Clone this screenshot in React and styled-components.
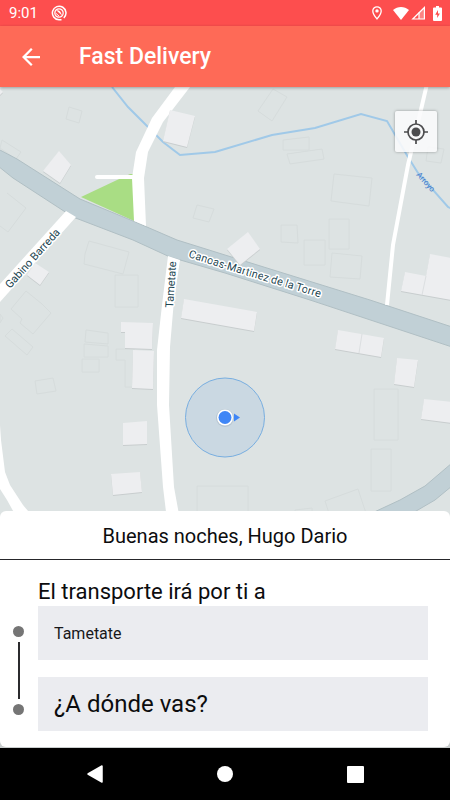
import React, { useState } from "react";
import styled, { createGlobalStyle } from "styled-components";

const GlobalStyle = createGlobalStyle`
  * { box-sizing: border-box; }
  body { margin: 0; background: #c9cdcd; font-family: Roboto, "Noto Sans", sans-serif; }
  button, input { font-family: inherit; }
`;

const Screen = styled.div`
  display: flex;
  flex-direction: column;
  min-height: 100vh;
`;

const StatusBar = styled.header`
  display: flex;
  align-items: center;
  height: 26px;
  padding: 0 8px 0 9px;
  background: #fd4e4e;
  color: #fff;
`;

const Clock = styled.time`
  font-size: 15px;
  line-height: 26px;
  margin-right: 13px;
`;

const StatusIcons = styled.div`
  display: flex;
  align-items: center;
  margin-left: auto;
`;

const StatusIcon = styled.svg`
  display: block;
  width: ${(p) => p.$w}px;
  height: ${(p) => p.$h}px;
  margin-left: ${(p) => p.$gap || 0}px;
`;

const AppBar = styled.div`
  display: flex;
  align-items: center;
  gap: 30px;
  height: 61px;
  padding: 0 13px;
  background: #fe6a57;
  color: #fff;
  box-shadow: 0 1px 3px rgba(0, 0, 0, 0.3);
  z-index: 1;
`;

const BackButton = styled.button`
  display: grid;
  place-items: center;
  width: 36px;
  height: 36px;
  padding: 0;
  border: 0;
  background: none;
  color: inherit;
`;

const Title = styled.h1`
  margin: 0;
  font-size: 23px;
  line-height: 30px;
  font-weight: 500;
`;

const MapArea = styled.main`
  position: relative;
  flex: 1 1 430px;
  min-height: 240px;
  margin-bottom: -6px;
  background: #dde3e3;
`;

const MapDrawing = styled.svg`
  position: absolute;
  inset: 0;
  width: 100%;
  height: 100%;
  font-family: Roboto, sans-serif;
`;

const LocateButton = styled.button`
  position: absolute;
  top: 24px;
  right: 13px;
  display: grid;
  place-items: center;
  width: 42px;
  height: 41px;
  padding: 0;
  border: 0;
  border-radius: 2px;
  background: rgba(250, 250, 252, 0.87);
  box-shadow: 0 0 3px rgba(0, 0, 0, 0.35);
`;

const Sheet = styled.section`
  position: relative;
  background: #fff;
  border-radius: 6px;
  margin-bottom: 1px;
`;

const Greeting = styled.h2`
  margin: 0;
  padding: 11px 16px 9px;
  border-bottom: 1px solid #26262a;
  font-size: 20px;
  line-height: 28px;
  font-weight: 400;
  text-align: center;
  color: #0c0c0e;
`;

const TripForm = styled.form`
  display: grid;
  grid-template-columns: 38px 1fr;
  padding: 18px 22px 16px 0;
`;

const FieldLabel = styled.label`
  grid-column: 2;
  font-size: 22px;
  line-height: 28px;
  color: #0c0c0e;
`;

const Rail = styled.div`
  display: flex;
  flex-direction: column;
  align-items: center;
  gap: 5px;
  padding: 20px 1px 16px 0;
`;

const Stop = styled.span`
  width: 11px;
  height: 11px;
  border-radius: 50%;
  background: #757575;
`;

const Line = styled.span`
  flex: 1;
  width: 2px;
  background: #2b2b2e;
`;

const Fields = styled.div`
  display: grid;
  gap: 17px;
`;

const Field = styled.input`
  width: 100%;
  height: 54px;
  padding: 0 16px;
  border: 0;
  border-radius: 0;
  outline: 0;
  background: #ebecf0;
  color: #18181a;
  font-size: ${(p) => (p.$large ? 24 : 16)}px;

  &::placeholder {
    color: #0c0c0e;
    opacity: 1;
  }
`;

const NavBar = styled.nav`
  display: grid;
  grid-template-columns: repeat(3, 1fr);
  height: 52px;
  padding: 0 30px;
  background: #000;
`;

const NavButton = styled.button`
  display: grid;
  place-items: center;
  padding: 0;
  border: 0;
  background: none;
`;

const OUTLINES = [
  "M69 107l13 4-3 12-13-4z",
  "M2 140l19 12-5 7-16-11z",
  "M7 193l19 15-18 24-8-6",
  "M89 241l40 11-6 22-39-10 1-10z",
  "M115 275h23v32h-23z",
  "M197 205l17 4-5 13-16-4z",
  "M26 291l16 13 9 9-18 21-13-11 2-4-11-10z",
  "M0 323v-9l3 4z",
  "M12 329l21 18-6 8-22-19z",
  "M86 330l22 3v11l-23-2z",
  "M84 344l24 2v11h-24z",
  "M82 359h17v13H82z",
  "M116 349h18v38h-9v-27h-9z",
  "M35 381l18-3 3 13-19 3z",
  "M273 89l14 8-15 24-14-10z",
  "M283 140l26-3v13h-26z",
  "M287 154l35-5 2 10-34 5z",
  "M334 174l38 4-3 28-38-5z",
  "M281 225h16l1 18-17-1z",
  "M329 219h20v30h-20z",
  "M304 240h21v25h-21z",
  "M332 253l30 3-2 23-30-2z",
  "M428 147l16 2-3 14-15-2z",
  "M374 389h24v51h-24z",
  "M371 449h20v42h-20z",
  "M197 525v-39h51v39z",
  "M325 501l33-12 8 24-33 12z",
  "M295 510l17-2v14h-16z",
];

const BUILDINGS = [
  "M170 110l25 6-8 31-24-6z",
  "M59 151l12 14-11 18-17-12z",
  "M27 275l8-12 14 9-9 13z",
  "M184 299l73 13-3 19-73-13z",
  "M227 249l21-17 12 17-20 16z",
  "M121 322l32 1-1 26-27-1v-16h-4z",
  "M133 350l21 1-1 38-21-1z",
  "M123 423l24-2v23l-24 1z",
  "M111 474l29-2 2 20-29 3z",
  "M338 330l46 8-3 19-46-8z",
  "M397 358l21 2-4 27-20-3z",
  "M424 399l28 3v21l-31-4z",
  "M405 272l21 4 4-22 22 4v42l-51-9z",
  "M0 89l3 3-3 3z",
];

function CityMap() {
  return (
    <MapDrawing
      viewBox="0 87 450 430"
      preserveAspectRatio="xMidYMid slice"
      role="img"
      aria-label="Mapa de la zona"
    >
      <g fill="none" stroke="#d6dcdc">
        {OUTLINES.map((d) => (
          <path key={d} d={d} />
        ))}
      </g>
      <path
        d="M112 87L128 107 163 142 180 155 215 152 225 149 272 135 315 128 361 114 387 121 408 157 418 173 448 207 452 209"
        fill="none"
        stroke="#a0c9e8"
        strokeWidth="2"
      />
      <path d="M81 197L117 180 130 174H134V221z" fill="#a9dd84" />
      <path
        d="M-2 149L17 159 80 199 133 221 177 240 225 255 370 300 452 327V347L310 300 225 273 170 257 133 240 73 217 13 178 -2 166z"
        fill="#c1d0d6"
        stroke="#b0bfc4"
      />
      <path
        d="M452 463L425 486 400 500 370 514H411L435 500 452 486z"
        fill="#c1d0d6"
        stroke="#b0bfc4"
      />
      <g fill="#fff">
        <path d="M175 87H190L163 122 148 152 144 178 146 226 134 221 132 178 136 152 152 118z" />
        <path d="M168 256L180 260 174 300 170 347 169 405 174 487 180 520H167L163 487 157 405V350L162 305z" />
        <path d="M66 211L76 217 0 302V284z" />
        <path d="M0 425L1 440 5 472 10 485 23 505 34 518H17L7 500 0 489z" />
      </g>
      <path d="M427 84L408 165 393 245 387 305" fill="none" stroke="#fff" strokeWidth="4" />
      <path d="M97 177H134" stroke="#fff" strokeWidth="4" strokeLinecap="round" />
      <g fill="#c8cdce" transform="translate(0 1)">
        {BUILDINGS.map((d) => (
          <path key={d} d={d} />
        ))}
      </g>
      <g fill="#edeef0">
        {BUILDINGS.map((d) => (
          <path key={d} d={d} />
        ))}
      </g>
      <path d="M362 334l-3 19M426 276l-4 19" stroke="#dcdfe1" />
      <g
        fill="#1c4550"
        stroke="#fff"
        strokeWidth="3"
        strokeLinejoin="round"
        paintOrder="stroke"
        fontSize="11"
      >
        <path id="highway-label" d="M188 257L225 269 322 298 352 307" fill="none" stroke="none" />
        <text>
          <textPath href="#highway-label">Canoas-Martinez de la Torre</textPath>
        </text>
        <text transform="translate(173 308) rotate(-86)">Tametate</text>
        <text transform="translate(10 289) rotate(-48)">Gabino Barreda</text>
      </g>
      <text transform="translate(416 175) rotate(48)" fontSize="8" fill="#3f7bcb">
        Arroyo
      </text>
      <circle cx="225" cy="417.500" r="39.500" fill="#4a90e2" fillOpacity="0.13" stroke="#78aee0" />
      <circle cx="225" cy="418" r="9" fill="#9fb0bd" fillOpacity="0.45" />
      <circle cx="225" cy="417.500" r="8" fill="#fff" />
      <circle cx="225" cy="417.500" r="6.500" fill="#3f86f6" />
      <path d="M234 413.500L240 417.500 234 421.500z" fill="#3f86f6" />
    </MapDrawing>
  );
}

export default function App() {
  const [origin, setOrigin] = useState("Tametate");
  const [destination, setDestination] = useState("");

  return (
    <Screen>
      <GlobalStyle />
      <StatusBar>
        <Clock>9:01</Clock>
        <StatusIcon $w={16} $h={16} viewBox="0 0 16 16" aria-hidden="true">
          <path
            d="M12.800 13A6.800 6.800 0 1 0 8 14.800h2.500"
            fill="none"
            stroke="#fff"
            strokeWidth="1.500"
          />
          <circle cx="8" cy="8" r="4.200" fill="none" stroke="#fff" strokeWidth="1.200" />
          <path d="M5.500 5.500Q8 4.500 9.500 7L11 10.500z" fill="#fff" />
          <path d="M4.500 8l3.500 3" stroke="#fff" />
        </StatusIcon>
        <StatusIcons>
          <StatusIcon $w={10} $h={14} viewBox="0 0 10 14" aria-hidden="true">
            <path
              d="M5 .8C2.600.8.8 2.600.8 4.900.8 8 5 12.900 5 12.900S9.200 8 9.200 4.900C9.200 2.600 7.400.8 5 .8z"
              fill="none"
              stroke="#fff"
              strokeWidth="1.300"
            />
            <circle cx="5" cy="4.900" r="1.700" fill="#fff" />
          </StatusIcon>
          <StatusIcon $w={16} $h={13} $gap={11} viewBox="0 0 16 13" aria-hidden="true">
            <path d="M0 3C4.700-1 11.300-1 16 3L8 13z" fill="#fff" />
          </StatusIcon>
          <StatusIcon $w={15} $h={14} $gap={2} viewBox="0 0 15 14" aria-hidden="true">
            <path d="M13.400 1.500V13H1.800z" fill="none" stroke="#fff" strokeWidth="1.200" />
            <path d="M8 6.900L13 2V13H8z" fill="#fff" fillOpacity="0.3" />
            <path d="M8 6.500V13" stroke="#fff" strokeWidth="1.200" />
          </StatusIcon>
          <StatusIcon $w={9} $h={15} $gap={7} viewBox="0 0 9 15" aria-hidden="true">
            <path d="M3 0h3v1.500h2q1 0 1 1V14q0 1-1 1H1q-1 0-1-1V2.500q0-1 1-1h2z" fill="#fff" />
            <path d="M5 4L2.200 8.800H4.200V12L6.900 7.400H5z" fill="#fd4e4e" />
          </StatusIcon>
        </StatusIcons>
      </StatusBar>

      <AppBar>
        <BackButton type="button" aria-label="Volver">
          <svg width="18" height="18" viewBox="4 4 16 16" fill="currentColor">
            <path d="M20 11H7.830l5.590-5.590L12 4l-8 8 8 8 1.410-1.410L7.830 13H20v-2z" />
          </svg>
        </BackButton>
        <Title>Fast Delivery</Title>
      </AppBar>

      <MapArea>
        <CityMap />
        <LocateButton type="button" aria-label="Mi ubicación">
          <svg width="24" height="24" viewBox="0 0 24 24" fill="none" stroke="#4c4c4e" strokeWidth="1.700">
            <circle cx="12" cy="12" r="8" />
            <circle cx="12" cy="12" r="4.500" fill="#4c4c4e" stroke="none" />
            <path d="M12 0v4M12 20v4M0 12h4M20 12h4" />
          </svg>
        </LocateButton>
      </MapArea>

      <Sheet>
        <Greeting>Buenas noches, Hugo Dario</Greeting>
        <TripForm>
          <FieldLabel htmlFor="origin">El transporte irá por ti a</FieldLabel>
          <Rail aria-hidden="true">
            <Stop />
            <Line />
            <Stop />
          </Rail>
          <Fields>
            <Field id="origin" value={origin} onChange={(e) => setOrigin(e.target.value)} />
            <Field
              $large
              aria-label="¿A dónde vas?"
              placeholder="¿A dónde vas?"
              value={destination}
              onChange={(e) => setDestination(e.target.value)}
            />
          </Fields>
        </TripForm>
      </Sheet>

      <NavBar aria-label="Sistema">
        <NavButton type="button" aria-label="Atrás">
          <svg width="16" height="18" viewBox="0 0 16 18">
            <path d="M1 9L15 1V17z" fill="#fff" stroke="#fff" strokeWidth="1.500" strokeLinejoin="round" />
          </svg>
        </NavButton>
        <NavButton type="button" aria-label="Inicio">
          <svg width="16" height="16" viewBox="0 0 16 16">
            <circle cx="8" cy="8" r="8" fill="#fff" />
          </svg>
        </NavButton>
        <NavButton type="button" aria-label="Recientes">
          <svg width="17" height="17" viewBox="0 0 17 17">
            <rect width="17" height="17" rx="1" fill="#fff" />
          </svg>
        </NavButton>
      </NavBar>
    </Screen>
  );
}
